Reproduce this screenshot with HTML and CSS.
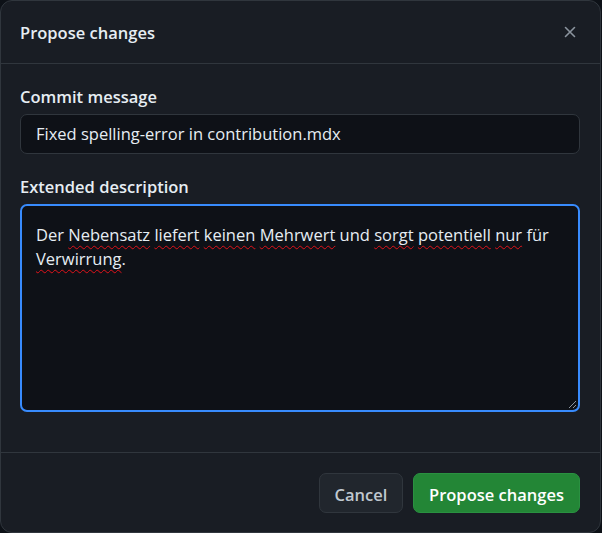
FILE: index.html
```html
<!DOCTYPE html>
<html lang="de">
<head>
<meta charset="utf-8">
<title>Propose changes</title>
<link rel="stylesheet" href="styles.css">
</head>
<body>
<div class="dialog">
  <header class="dialog-header">
    <h1 class="dialog-title">Propose changes</h1>
    <button class="close-btn" aria-label="Close">
      <svg width="16" height="16" viewBox="0 0 16 16"><path d="M3.5 3.5l9 9M12.5 3.5l-9 9" stroke="currentColor" stroke-width="1.6" stroke-linecap="round" fill="none"/></svg>
    </button>
  </header>
  <div class="dialog-body">
    <label class="field-label">Commit message</label>
    <div class="text-input">Fixed spelling-error in contribution.mdx</div>
    <label class="field-label second">Extended description</label>
    <div class="textarea">Der <span class="sp">Nebensatz</span> <span class="sp">liefert</span> <span class="sp">keinen</span> <span class="sp">Mehrwert</span> und <span class="sp">sorgt</span> <span class="sp">potentiell</span> <span class="sp">nur</span> für<br><span class="sp">Verwirrung</span>.
      <svg class="grip" width="10" height="10" viewBox="0 0 10 10"><path d="M9 2L2 9M9 6L6 9" stroke="#8b949e" stroke-width="1" fill="none"/></svg>
    </div>
  </div>
  <footer class="dialog-footer">
    <button class="btn btn-cancel">Cancel</button>
    <button class="btn btn-primary">Propose changes</button>
  </footer>
</div>
</body>
</html>
```
FILE: styles.css
```css
html, body {
  margin: 0;
  padding: 0;
  background: #0d1117;
}
body {
  font-family: "Open Sans", "Noto Sans", sans-serif;
  color: #e6edf3;
  width: 602px;
  height: 533px;
  overflow: hidden;
}
.dialog {
  box-sizing: border-box;
  width: 601px;
  height: 533px;
  background: #191d24;
  border: 1px solid #30363d;
  border-radius: 12px;
  display: flex;
  flex-direction: column;
}
.dialog-header {
  height: 62px;
  border-bottom: 1px solid #30363d;
  display: flex;
  align-items: center;
  justify-content: space-between;
  padding: 0 19px 0 19px;
}
.dialog-title {
  margin: 0;
  font-size: 16.5px;
  font-weight: 600;
  color: #e6edf3;
}
.close-btn {
  background: none;
  border: 0;
  padding: 0;
  color: #8b949e;
  display: flex;
  width: 16px;
  height: 16px;
  margin-right: 3px;
}
.dialog-body {
  padding: 23px 20px 40px 19px;
  display: flex;
  flex-direction: column;
  border-bottom: 1px solid #30363d;
}
.field-label {
  font-size: 16.5px;
  font-weight: 600;
  line-height: 20px;
  color: #e6edf3;
  margin-bottom: 7px;
}
.field-label.second {
  margin-top: 23px;
}
.text-input {
  box-sizing: border-box;
  height: 40px;
  background: #0e1117;
  border: 1px solid #30363d;
  border-radius: 7px;
  padding: 0 15px;
  font-size: 16.5px;
  line-height: 38px;
  color: #e6edf3;
}
.textarea {
  position: relative;
  box-sizing: border-box;
  height: 208px;
  background: #0e1117;
  border: 2px solid #388bfd;
  border-radius: 7px;
  padding: 17px 14px;
  font-size: 16.5px;
  line-height: 24px;
  color: #e6edf3;
}
.sp {
  text-decoration: underline wavy #e0121a;
  text-decoration-thickness: 1.2px;
  text-underline-offset: 4px;
}
.grip {
  position: absolute;
  right: 1px;
  bottom: 1px;
}
.dialog-footer {
  flex: 1;
  display: flex;
  justify-content: flex-end;
  align-items: center;
  gap: 10px;
  padding: 0 20px;
}
.btn {
  font-family: inherit;
  font-size: 16.5px;
  font-weight: 600;
  height: 40px;
  border-radius: 7px;
  padding: 3px 14px 0;
  cursor: pointer;
}
.btn-cancel {
  background: #21262d;
  border: 1px solid #30363d;
  color: #c0c8d0;
  width: 84px;
}
.btn-primary {
  background: #238636;
  border: 1px solid #2a9141;
  color: #ffffff;
  width: 167px;
}
```
